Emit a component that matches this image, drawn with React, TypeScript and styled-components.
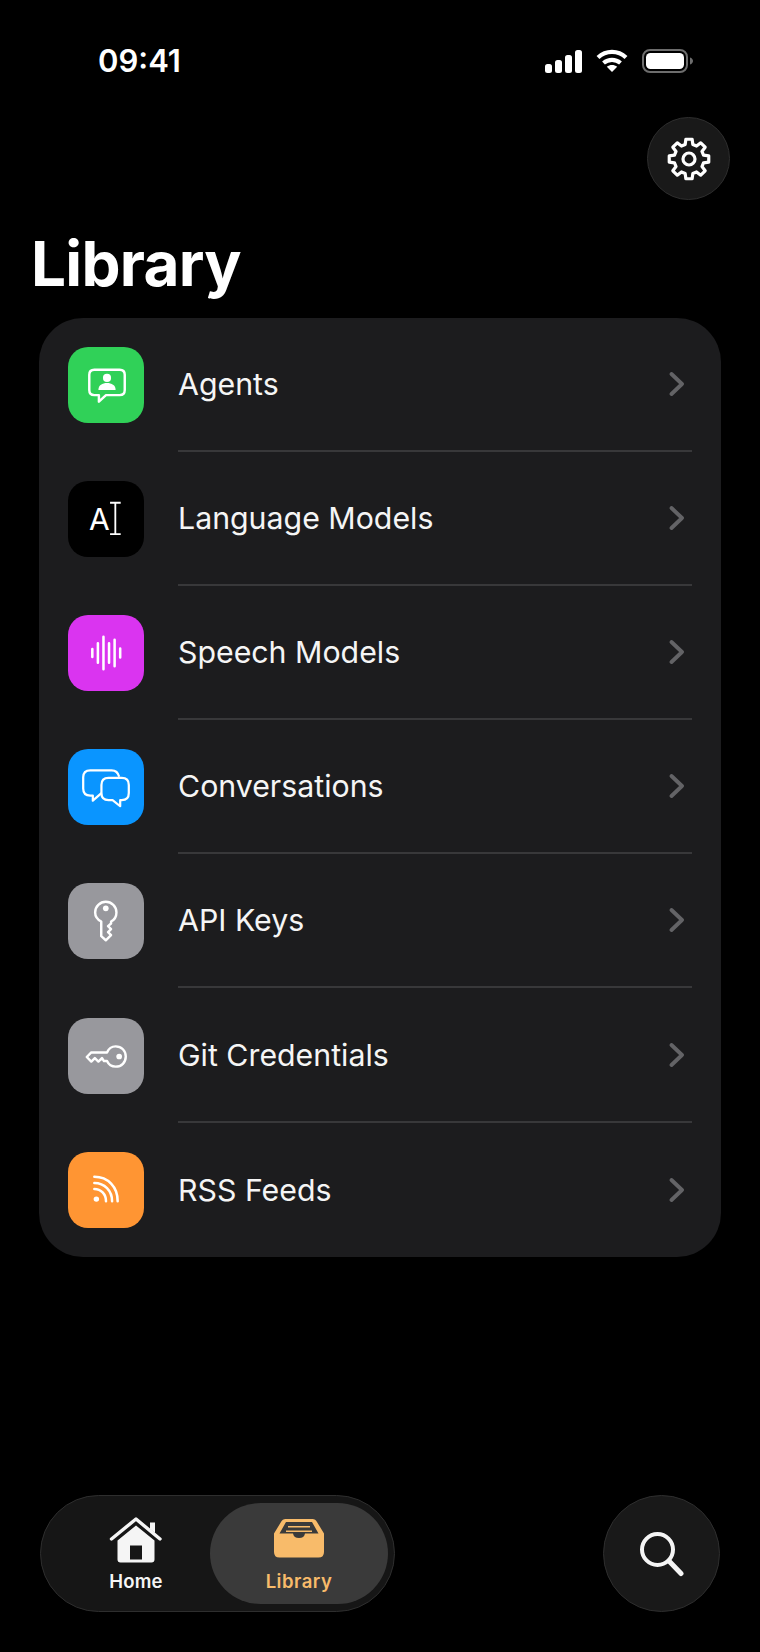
import React from "react";
import styled, { createGlobalStyle } from "styled-components";

const Global = createGlobalStyle`
  html, body { margin: 0; padding: 0; background: #000; }
  * { box-sizing: border-box; }
`;

const Page = styled.div`
  width: 760px;
  height: 1652px;
  background: #000;
  color: #fff;
  font-family: Inter, "Liberation Sans", sans-serif;
  display: flex;
  flex-direction: column;
  overflow: hidden;
`;

const StatusBar = styled.div`
  display: flex;
  align-items: center;
  justify-content: space-between;
  height: 24px;
  margin-top: 49px;
  padding: 0 67px 0 98px;
`;

const Time = styled.span`
  font-size: 31px;
  font-weight: 600;
  line-height: 24px;
  letter-spacing: 0;
`;

const StatusIcons = styled.div`
  display: flex;
  align-items: center;
  gap: 14px;
`;

const TopRow = styled.div`
  display: flex;
  justify-content: flex-end;
  padding: 44px 30px 0 0;
`;

const RoundButton = styled.div<{ $size: number }>`
  width: ${(p) => p.$size}px;
  height: ${(p) => p.$size}px;
  border-radius: 50%;
  background: #191919;
  border: 1.5px solid #2e2e2e;
  display: flex;
  align-items: center;
  justify-content: center;
`;

const Title = styled.h1`
  margin: 26px 0 0 31px;
  font-size: 62px;
  font-weight: 700;
  line-height: 76px;
  letter-spacing: -0.7px;
`;

const Card = styled.div`
  margin: 16px 39px 0;
  width: 682px;
  background: #1c1c1e;
  border-radius: 44px;
  display: flex;
  flex-direction: column;
`;

const Row = styled.div`
  height: 134.1px;
  display: flex;
  align-items: center;
  padding: 0 29px 0 29px;
  gap: 34px;
`;

const Tile = styled.div<{ $bg: string }>`
  width: 76px;
  height: 76px;
  flex: none;
  border-radius: 20px;
  background: ${(p) => p.$bg};
  position: relative;
  svg { display: block; }
`;

const TileLetter = styled.span`
  position: absolute;
  left: 21px;
  top: 20px;
  font-size: 30px;
  line-height: 36px;
  font-weight: 400;
`;

const RowBody = styled.div<{ $last?: boolean }>`
  flex: 1;
  align-self: stretch;
  display: flex;
  align-items: center;
  justify-content: space-between;
  border-bottom: ${(p) => (p.$last ? "none" : "2px solid #38383a")};
`;

const RowLabel = styled.span`
  font-size: 30.3px;
  font-weight: 400;
  color: #f5f5f5;
`;

const Chevron = styled.svg`
  margin-right: 8px;
  flex: none;
`;

const BottomBar = styled.div`
  margin-top: auto;
  margin-bottom: 40px;
  padding: 0 40px;
  display: flex;
  justify-content: space-between;
  align-items: center;
`;

const TabBar = styled.div`
  width: 355px;
  height: 117px;
  border-radius: 59px;
  background: #161616;
  border: 1.5px solid #2e2e2e;
  display: flex;
  align-items: center;
  padding: 0 6px 0 21px;
`;

const Tab = styled.div<{ $active?: boolean }>`
  height: 101px;
  width: ${(p) => (p.$active ? 178 : 148)}px;
  flex: none;
  border-radius: 51px;
  background: ${(p) => (p.$active ? "#3a3a3a" : "transparent")};
  color: ${(p) => (p.$active ? "#f8bb6a" : "#f5f5f5")};
  display: flex;
  flex-direction: column;
  align-items: center;
  justify-content: center;
  gap: 6px;
  padding-top: 1px;
`;

const TabLabel = styled.span<{ $active?: boolean }>`
  font-size: 18.5px;
  font-weight: 600;
  line-height: 24px;
  letter-spacing: ${(p) => (p.$active ? 0.5 : 0.2)}px;
`;

const gearPath = (() => {
  const pts: string[] = [];
  const teeth = 8;
  const rO = 20;
  const rI = 15;
  for (let i = 0; i < teeth; i++) {
    const c = (i / teeth) * Math.PI * 2 - Math.PI / 2;
    const step = (Math.PI * 2) / teeth;
    const add = (r: number, a: number) =>
      pts.push(`${(23 + r * Math.cos(a)).toFixed(2)} ${(23 + r * Math.sin(a)).toFixed(2)}`);
    add(rI, c - step * 0.33);
    add(rO, c - step * 0.2);
    add(rO, c + step * 0.2);
    add(rI, c + step * 0.33);
  }
  return `M${pts.join("L")}Z`;
})();

const GearIcon = () => (
  <svg width="46" height="46" viewBox="0 0 46 46" fill="none" stroke="#fff" strokeWidth="3.200" strokeLinejoin="round">
    <path d={gearPath} />
    <circle cx="23" cy="23" r="6" />
  </svg>
);

const SignalIcon = () => (
  <svg width="37" height="23" viewBox="0 0 37 23" fill="#fff">
    <rect x="0" y="14" width="7" height="9" rx="2.500" />
    <rect x="10" y="10" width="7" height="13" rx="2.500" />
    <rect x="20" y="5" width="7" height="18" rx="2.500" />
    <rect x="30" y="0" width="7" height="23" rx="2.500" />
  </svg>
);

const WifiIcon = () => (
  <svg width="32" height="24" viewBox="0 0 32 24" fill="none" stroke="#fff" strokeWidth="4.200">
    <path d="M2 8.500C10 1 22 1 30 8.500" />
    <path d="M7.500 14C12.500 9.700 19.500 9.700 24.500 14" />
    <path d="M16 23L10.800 17.800C13.800 15.400 18.200 15.400 21.200 17.800Z" fill="#fff" stroke="none" />
  </svg>
);

const BatteryIcon = () => (
  <svg width="51" height="24" viewBox="0 0 51 24" fill="none">
    <rect x="1" y="1" width="44" height="22" rx="7" stroke="#6d6d6d" strokeWidth="2" />
    <rect x="4" y="4" width="38" height="16" rx="4.500" fill="#fff" />
    <path d="M48 8.500c2 .6 3 2 3 3.500s-1 2.900-3 3.500z" fill="#6d6d6d" />
  </svg>
);

const AgentGlyph = () => (
  <svg width="76" height="76" viewBox="0 0 75 75" fill="none">
    <path
      d="M26 22.500H51Q56 22.500 56 27.500V42.500Q56 47.500 51 47.500H37.500L30.500 54V47.500H26Q21 47.500 21 42.500V27.500Q21 22.500 26 22.500Z"
      stroke="#fff"
      strokeWidth="2.400"
      strokeLinejoin="round"
    />
    <circle cx="38.500" cy="30.500" r="4" fill="#fff" />
    <path d="M30 42.500C30 37.500 34 35.500 38.500 35.500S47 37.500 47 42.500Z" fill="#fff" />
  </svg>
);

const CursorGlyph = () => (
  <svg width="76" height="76" viewBox="0 0 75 75" fill="none" stroke="#fff" strokeWidth="1.800">
    <path d="M41.500 21.500H52M46.700 21.500V52.500M41.500 52.500H52" />
  </svg>
);

const SpeechGlyph = () => (
  <svg width="76" height="76" viewBox="0 0 75 75" stroke="#fff" strokeWidth="2.500" strokeLinecap="round">
    <path d="M24 33.500V41.500M29.500 28V47M35 21.500V53.500M40.500 28V47M46 24.500V50.500M51.500 33V42" />
  </svg>
);

const ChatGlyph = () => (
  <svg width="76" height="76" viewBox="0 0 75 75" fill="none" stroke="#fff" strokeWidth="2.200" strokeLinejoin="round">
    <path d="M33 43.500L24.500 51V46H22Q15 46 15 39V28Q15 21 22 21H43Q49 21 50.500 27.500" />
    <path d="M40 28.500H53Q60 28.500 60 35.500V43.500Q60 50.500 53 50.500H51.500V56.500L44 50.500H40Q33 50.500 33 43.500V35.500Q33 28.500 40 28.500Z" />
  </svg>
);

const VKeyGlyph = () => (
  <svg width="76" height="76" viewBox="0 0 75 75" fill="none" stroke="#fff" strokeWidth="2.400" strokeLinejoin="round">
    <path d="M32.800 38V52.500L37.300 56.500L42.500 51.500L39.500 48.500L42.500 45.500L39.500 42.500L42.500 40V38C45.800 36.200 47.800 33 47.800 29C47.800 23 43 18.500 37.300 18.500S26.800 23 26.800 29C26.800 33 29.500 36.200 32.800 38Z" />
    <circle cx="37.300" cy="25" r="2.800" fill="#fff" stroke="none" />
  </svg>
);

const HKeyGlyph = () => (
  <svg width="76" height="76" viewBox="0 0 75 75" fill="none" stroke="#fff" strokeWidth="2.400" strokeLinejoin="round">
    <path d="M38.500 34H23L18.500 38.500L23 43L26.500 39.500L30 43L33.500 39.500L35.500 42.500H38.500C40 45.800 43 48 47 48C52.800 48 57 43.800 57 38S52.800 28 47 28C43 28 40 30.500 38.500 34Z" />
    <circle cx="50.500" cy="38" r="2.800" fill="#fff" stroke="none" />
  </svg>
);

const RssGlyph = () => (
  <svg width="76" height="76" viewBox="0 0 75 75" fill="none" stroke="#fff" strokeWidth="2.500" strokeLinecap="round">
    <circle cx="28" cy="46.500" r="2.700" fill="#fff" stroke="none" />
    <path d="M26 36.500C32.500 36.500 37.500 41.500 37.500 48.500" />
    <path d="M26 30.500C36 30.500 43.500 38 43.500 48.500" />
    <path d="M26 24.500C39.500 24.500 49 34.500 49 48.500" />
  </svg>
);

const HomeIcon = () => (
  <svg width="54" height="47" viewBox="0 0 54 47" fill="none">
    <path d="M41 6.500H46V17L41 13Z" fill="#f5f5f5" />
    <path d="M2.500 23L27 3L51 23" stroke="#f5f5f5" strokeWidth="3.400" strokeLinecap="round" strokeLinejoin="round" />
    <path
      fillRule="evenodd"
      d="M27 9.500L45.500 24.500V43.500Q45.500 46.500 42.500 46.500H11.500Q8.500 46.500 8.500 43.500V24.500ZM21 29.500V43.500H33V29.500Z"
      fill="#f5f5f5"
    />
  </svg>
);

const TrayIcon = () => (
  <svg width="52" height="47" viewBox="0 0 52 47" fill="none">
    <path
      fillRule="evenodd"
      d="M12.500 3H39.500Q42.500 3 44 6L51 17.500V36Q51 41.500 45.500 41.500H6.500Q1 41.500 1 36V17.500L8 6Q9.500 3 12.500 3ZM13 6L6.500 17.500H20C20.500 20.500 22.500 22 26 22S31.500 20.500 32 17.500H45.500L39 6Z"
      fill="#f8bb6a"
    />
    <path d="M15 10H37V11.500H15ZM13 14.500H39V16H13Z" fill="#f8bb6a" />
  </svg>
);

const SearchIcon = () => (
  <svg width="46" height="46" viewBox="0 0 46 46" fill="none" stroke="#f5f5f5" strokeWidth="4" strokeLinecap="round">
    <circle cx="18.500" cy="18.500" r="15.500" />
    <path d="M30 30L42 42.500" strokeWidth="5" />
  </svg>
);

const ChevronIcon = () => (
  <Chevron width="15" height="24" viewBox="0 0 15 24" fill="none" stroke="#636366" strokeWidth="3.800" strokeLinecap="round" strokeLinejoin="round">
    <path d="M2.500 2L13 12L2.500 22" />
  </Chevron>
);

const rows = [
  { label: "Agents", bg: "#30d158", glyph: <AgentGlyph /> },
  { label: "Language Models", bg: "#000000", glyph: <><TileLetter>A</TileLetter><CursorGlyph /></> },
  { label: "Speech Models", bg: "#da34f0", glyph: <SpeechGlyph /> },
  { label: "Conversations", bg: "#0a95ff", glyph: <ChatGlyph /> },
  { label: "API Keys", bg: "#98989d", glyph: <VKeyGlyph /> },
  { label: "Git Credentials", bg: "#98989d", glyph: <HKeyGlyph /> },
  { label: "RSS Feeds", bg: "#ff9533", glyph: <RssGlyph /> },
];

export default function App() {
  return (
    <Page>
      <Global />
      <StatusBar>
        <Time>09:41</Time>
        <StatusIcons>
          <SignalIcon />
          <WifiIcon />
          <BatteryIcon />
        </StatusIcons>
      </StatusBar>
      <TopRow>
        <RoundButton $size={83}>
          <GearIcon />
        </RoundButton>
      </TopRow>
      <Title>Library</Title>
      <Card>
        {rows.map((r, i) => (
          <Row key={r.label}>
            <Tile $bg={r.bg}>{r.glyph}</Tile>
            <RowBody $last={i === rows.length - 1}>
              <RowLabel>{r.label}</RowLabel>
              <ChevronIcon />
            </RowBody>
          </Row>
        ))}
      </Card>
      <BottomBar>
        <TabBar>
          <Tab>
            <HomeIcon />
            <TabLabel>Home</TabLabel>
          </Tab>
          <Tab $active>
            <TrayIcon />
            <TabLabel $active>Library</TabLabel>
          </Tab>
        </TabBar>
        <RoundButton $size={117}>
          <SearchIcon />
        </RoundButton>
      </BottomBar>
    </Page>
  );
}
